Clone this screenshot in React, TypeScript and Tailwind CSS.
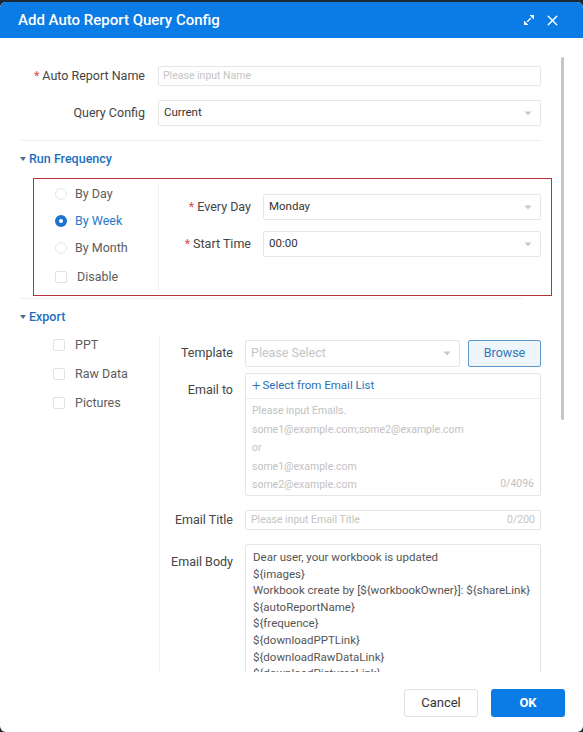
import { X } from "lucide-react"

const font = { fontFamily: "Roboto, 'Noto Sans', sans-serif" }

function Caret() {
  return (
    <svg width="8" height="5" viewBox="0 0 8 5" className="shrink-0">
      <path d="M0.5 0.5 L7.5 0.5 L4 4.5 Z" fill="#c8c8c8" />
    </svg>
  )
}

function SelectBox({ value, placeholder, h = "h-[26px]" }: { value?: string; placeholder?: string; h?: string }) {
  return (
    <div className={`flex flex-1 items-center justify-between border border-[#e6e6e6] rounded-[2px] pl-[5px] pr-[8px] ${h}`}>
      {value ? (
        <span className="text-[11.5px] text-[#333]">{value}</span>
      ) : (
        <span className="text-[12.5px] text-[#c4c4c4]">{placeholder}</span>
      )}
      <Caret />
    </div>
  )
}

function Radio({ checked, label }: { checked?: boolean; label: string }) {
  return (
    <div className="flex items-center gap-[8px] h-[20px]">
      {checked ? (
        <span className="w-[12px] h-[12px] rounded-full bg-[#1c74cf] flex items-center justify-center">
          <span className="w-[4px] h-[4px] rounded-full bg-white" />
        </span>
      ) : (
        <span className="w-[12px] h-[12px] rounded-full border border-[#e8e8e8]" />
      )}
      <span className={`text-[12.5px] ${checked ? "text-[#2678c9]" : "text-[#5c5c5c]"}`}>{label}</span>
    </div>
  )
}

function Check({ label }: { label: string }) {
  return (
    <div className="flex items-center gap-[10px] h-[20px]">
      <span className="w-[12px] h-[12px] rounded-[2px] border border-[#e2e2e2]" />
      <span className="text-[12.5px] text-[#5c5c5c]">{label}</span>
    </div>
  )
}

function SectionTitle({ children }: { children: string }) {
  return (
    <div className="flex items-center gap-[3px] h-[16px] text-[#1e6fbf] text-[12.5px] font-medium">
      <svg width="6" height="4" viewBox="0 0 6 4">
        <path d="M0 0 L6 0 L3 4 Z" fill="#4d6e8f" />
      </svg>
      {children}
    </div>
  )
}

const bodyLines = [
  "Dear user, your workbook is updated",
  "${images}",
  "Workbook create by [${workbookOwner}]: ${shareLink}",
  "${autoReportName}",
  "${frequence}",
  "${downloadPPTLink}",
  "${downloadRawDataLink}",
  "${downloadPicturesLink}",
]

export default function App() {
  return (
    <div className="w-[583px] h-[732px] bg-[#1d2837] pt-[2px]" style={font}>
      <div className="h-[730px] bg-white rounded-[6px] overflow-hidden flex flex-col">
        {/* header */}
        <div className="h-[36px] shrink-0 bg-[#0b7be5] flex items-center justify-between pl-[18px] pr-[22px]">
          <span className="text-white text-[15px] font-medium">Add Auto Report Query Config</span>
          <div className="flex items-center gap-[9px]">
            <svg width="12" height="12" viewBox="0 0 12 12">
              <path d="M4.2 7.8 L7.8 4.2" stroke="white" strokeWidth="1.4" />
              <path d="M6.5 1 L11 1 L11 5.5 Z" fill="white" />
              <path d="M1 6.5 L1 11 L5.5 11 Z" fill="white" />
            </svg>
            <X size={17} color="white" strokeWidth={2} />
          </div>
        </div>

        {/* scrollable body */}
        <div className="relative h-[634px] shrink-0 overflow-hidden">
          <div className="absolute right-[19px] top-[19px] w-[3px] h-[363px] rounded-full bg-[#c6c6c6]" />

          <div className="pt-[28px] pl-[20px] pr-[42px] flex flex-col">
            <div className="flex items-center gap-[13px]">
              <div className="w-[125px] text-right text-[12.5px] text-[#444]">
                <span className="text-[#e0484d] mr-[3px]">*</span>Auto Report Name
              </div>
              <div className="flex-1 h-[20px] border border-[#e6e6e6] rounded-[2px] flex items-center pl-[4px]">
                <span className="text-[10.5px] text-[#c4c4c4]">Please input Name</span>
              </div>
            </div>
            <div className="flex items-center gap-[13px] mt-[14px]">
              <div className="w-[125px] text-right text-[12.5px] text-[#444]">Query Config</div>
              <SelectBox value="Current" />
            </div>
          </div>

          <div className="mt-[14px] ml-[20px] mr-[42px] border-t border-[#f0f0f0]" />

          <div className="pl-[20px] pt-[10px]">
            <SectionTitle>Run Frequency</SectionTitle>
          </div>

          {/* frequency box */}
          <div className="mt-[11px] ml-[33px] mr-[31px] h-[118px] border-[1.5px] border-[#b5323b] flex pl-[21px] pr-[10px]">
            <div className="w-[104px] pt-[1px] flex flex-col gap-[7px] border-r border-[#f0f0f0] my-[4px]">
              <Radio label="By Day" />
              <Radio checked label="By Week" />
              <Radio label="By Month" />
              <div className="mt-[2px]">
                <Check label="Disable" />
              </div>
            </div>
            <div className="flex-1 pt-[15px] flex flex-col gap-[11px]">
              <div className="flex items-center gap-[12px]">
                <div className="w-[92px] text-right text-[12.5px] text-[#444]">
                  <span className="text-[#e0484d] mr-[3px]">*</span>Every Day
                </div>
                <SelectBox value="Monday" />
              </div>
              <div className="flex items-center gap-[12px]">
                <div className="w-[92px] text-right text-[12.5px] text-[#444]">
                  <span className="text-[#e0484d] mr-[3px]">*</span>Start Time
                </div>
                <SelectBox value="00:00" />
              </div>
            </div>
          </div>

          <div className="mt-[2px] ml-[20px] mr-[60px] border-t border-[#f0f0f0]" />

          <div className="pl-[20px] pt-[10px]">
            <SectionTitle>Export</SectionTitle>
          </div>

          {/* export */}
          <div className="mt-[18px] ml-[53px] mr-[42px] flex">
            <div className="w-[106px] flex flex-col gap-[9px] -mt-[8px]">
              <Check label="PPT" />
              <Check label="Raw Data" />
              <Check label="Pictures" />
            </div>
            <div className="flex-1 border-l border-[#f0f0f0] -mt-[8px] pt-[5px] h-[340px] flex flex-col">
              <div className="flex items-center gap-[12px]">
                <div className="w-[73px] text-right text-[12.5px] text-[#444]">Template</div>
                <div className="flex-1 flex gap-[8px]">
                  <SelectBox placeholder="Please Select" h="h-[27px]" />
                  <div className="w-[73px] h-[27px] border border-[#5d98cc] bg-[#eef6fc] rounded-[2px] flex items-center justify-center text-[12.5px] text-[#2f77b8]">
                    Browse
                  </div>
                </div>
              </div>

              <div className="flex gap-[12px] mt-[6px]">
                <div className="w-[73px] text-right text-[12.5px] text-[#444] pt-[8px]">Email to</div>
                <div className="flex-1 h-[123px] border border-[#e6e6e6] rounded-[2px] flex flex-col">
                  <div className="h-[26px] border-b border-[#ececec] flex items-center pl-[6px] gap-[2px] text-[11.5px] text-[#2a6fb6]">
                    <span className="text-[15px] leading-none font-light -mt-[1px]">+</span>
                    Select from Email List
                  </div>
                  <div className="relative flex-1 pl-[6px] pt-[3px] text-[10.5px] text-[#c2c2c2] leading-[18.6px]">
                    <div>Please input Emails.</div>
                    <div>some1@example.com;some2@example.com</div>
                    <div>or</div>
                    <div>some1@example.com</div>
                    <div>some2@example.com</div>
                    <span className="absolute right-[6px] bottom-[1px]">0/4096</span>
                  </div>
                </div>
              </div>

              <div className="flex items-center gap-[12px] mt-[14px]">
                <div className="w-[73px] text-right text-[12.5px] text-[#444]">Email Title</div>
                <div className="flex-1 h-[20px] border border-[#e6e6e6] rounded-[2px] flex items-center justify-between px-[5px] text-[10.5px] text-[#c4c4c4]">
                  <span>Please input Email Title</span>
                  <span>0/200</span>
                </div>
              </div>

              <div className="flex gap-[12px] mt-[14px]">
                <div className="w-[73px] text-right text-[12.5px] text-[#444] pt-[9px]">Email Body</div>
                <div className="flex-1 h-[150px] border border-[#e6e6e6] rounded-[2px] pl-[7px] pt-[4px] text-[11.5px] text-[#555] leading-[16.6px]">
                  {bodyLines.map((line) => (
                    <div key={line}>{line}</div>
                  ))}
                </div>
              </div>
            </div>
          </div>
        </div>

        {/* footer */}
        <div className="flex-1 flex items-start justify-end gap-[13px] pr-[18px] pt-[17px]">
          <button className="w-[74px] h-[28px] border border-[#e0e0e0] rounded-[3px] bg-white text-[13px] text-[#333]">
            Cancel
          </button>
          <button className="w-[74px] h-[28px] rounded-[3px] bg-[#0b7be5] text-[13px] font-bold text-white">
            OK
          </button>
        </div>
      </div>
    </div>
  )
}
